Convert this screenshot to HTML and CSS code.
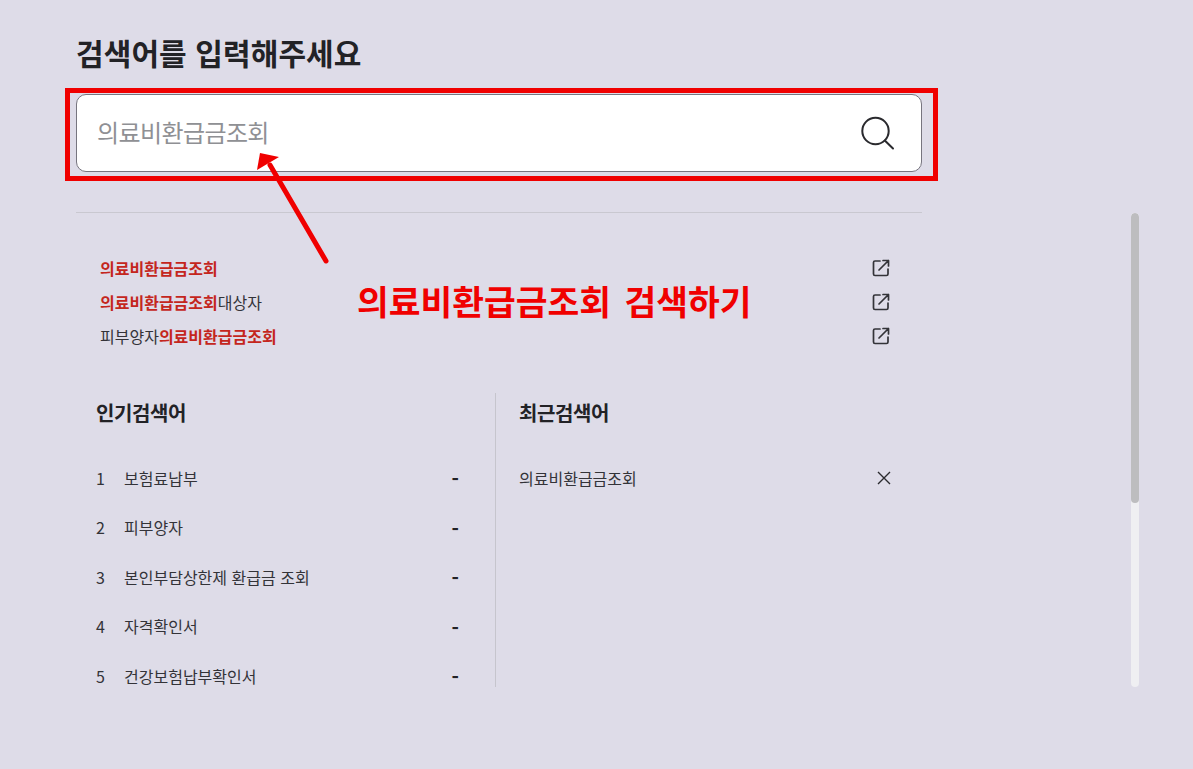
FILE: index.html
```html
<!DOCTYPE html>
<html lang="ko">
<head>
<meta charset="utf-8">
<title>검색</title>
<link rel="stylesheet" href="styles.css">
</head>
<body>
<main class="panel">
  <h1 class="title">검색어를 입력해주세요</h1>
  <div class="search">
    <span class="placeholder">의료비환급금조회</span>
    <svg class="search-icon" width="36" height="36" viewBox="0 0 36 36" fill="none" stroke="#2a2a2e" stroke-width="2"><circle cx="16.5" cy="16" r="13.2"/><path d="M25.8 25.5 L34 33.5" stroke-linecap="round"/></svg>
  </div>
  <hr class="rule">
  <ul class="suggest">
    <li class="suggest-row"><span><b>의료비환급금조회</b></span><svg class="ext" width="18" height="18" viewBox="0 0 18 18" fill="none" stroke="#333338" stroke-width="1.700" stroke-linecap="round" stroke-linejoin="round"><path d="M8 2H3a1.500 1.500 0 0 0-1.500 1.500v11.500a1.500 1.500 0 0 0 1.500 1.500h11.500a1.500 1.500 0 0 0 1.500-1.500V10"/><path d="M7 11 L16.500 1.500M11 1.500h5.500V7"/></svg></li>
    <li class="suggest-row"><span><b>의료비환급금조회</b>대상자</span><svg class="ext" width="18" height="18" viewBox="0 0 18 18" fill="none" stroke="#333338" stroke-width="1.700" stroke-linecap="round" stroke-linejoin="round"><path d="M8 2H3a1.500 1.500 0 0 0-1.500 1.500v11.500a1.500 1.500 0 0 0 1.500 1.500h11.500a1.500 1.500 0 0 0 1.500-1.500V10"/><path d="M7 11 L16.500 1.500M11 1.500h5.500V7"/></svg></li>
    <li class="suggest-row"><span>피부양자<b>의료비환급금조회</b></span><svg class="ext" width="18" height="18" viewBox="0 0 18 18" fill="none" stroke="#333338" stroke-width="1.700" stroke-linecap="round" stroke-linejoin="round"><path d="M8 2H3a1.500 1.500 0 0 0-1.500 1.500v11.500a1.500 1.500 0 0 0 1.500 1.500h11.500a1.500 1.500 0 0 0 1.500-1.500V10"/><path d="M7 11 L16.500 1.500M11 1.500h5.500V7"/></svg></li>
  </ul>
  <div class="columns">
    <section class="col col-left">
      <h2 class="col-title">인기검색어</h2>
      <ol class="rank">
        <li class="rank-row"><span class="num">1</span><span class="term">보험료납부</span><span class="dash">-</span></li>
        <li class="rank-row"><span class="num">2</span><span class="term">피부양자</span><span class="dash">-</span></li>
        <li class="rank-row"><span class="num">3</span><span class="term">본인부담상한제 환급금 조회</span><span class="dash">-</span></li>
        <li class="rank-row"><span class="num">4</span><span class="term">자격확인서</span><span class="dash">-</span></li>
        <li class="rank-row"><span class="num">5</span><span class="term">건강보험납부확인서</span><span class="dash">-</span></li>
      </ol>
    </section>
    <section class="col col-right">
      <h2 class="col-title">최근검색어</h2>
      <div class="recent-row"><span>의료비환급금조회</span><svg width="16" height="16" viewBox="0 0 16 16" fill="none" stroke="#2a2a2e" stroke-width="1.400"><path d="M2 2 L14 14 M14 2 L2 14"/></svg></div>
    </section>
  </div>
</main>
<div class="scrollbar"><div class="thumb"></div></div>

<div class="frame"></div>
<svg class="arrow" width="90" height="130" viewBox="0 0 90 130" fill="none"><path d="M76 116 L20 20" stroke="#f00000" stroke-width="5" stroke-linecap="round"/><path d="M10 8 L29 12 L7 25 Z" fill="#f00000"/></svg>
<div class="note">의료비환급금조회 검색하기</div>
</body>
</html>
```
FILE: styles.css
```css
* { box-sizing: border-box; }
html, body { margin: 0; padding: 0; }
body {
  width: 1193px;
  height: 769px;
  overflow: hidden;
  background: #dedce8;
  font-family: "Noto Sans CJK KR", "Noto Sans", sans-serif;
  color: #222226;
  position: relative;
}
.panel { width: 846px; margin-left: 76px; padding-top: 31px; }
.title {
  margin: 0;
  font-size: 30px;
  line-height: 42px;
  font-weight: 700;
  letter-spacing: 0.1px;
  color: #222226;
}
.search {
  margin-top: 21px;
  height: 78px;
  background: #fff;
  border: 1px solid #77757f;
  border-radius: 10px;
  display: flex;
  align-items: center;
  justify-content: space-between;
  padding: 0 26px 0 20px;
}
.placeholder { font-size: 24px; line-height: 34px; letter-spacing: -0.6px; color: #8f9094; margin-bottom: 2px; }
.rule { margin: 40px 0 0; border: 0; border-top: 1px solid #c9c8d0; }
.suggest { list-style: none; margin: 38px 0 0; padding: 0 32px 0 24px; }
.suggest-row {
  height: 34px;
  display: flex;
  align-items: center;
  justify-content: space-between;
  font-size: 16px;
  line-height: 22px;
  color: #333338;
}
.suggest-row b { color: #c4261d; font-weight: 700; }
.columns { display: flex; margin-top: 40px; height: 294px; }
.col-left { width: 420px; border-right: 1px solid #c6c5cd; padding: 0 36px 0 20px; }
.col-right { flex: 1; padding: 0 30px 0 23px; }
.col-title { margin: 0; font-size: 20px; line-height: 40px; font-weight: 700; letter-spacing: -0.4px; color: #222226; }
.rank { list-style: none; margin: 20px 0 0; padding: 0; }
.rank-row { height: 49.500px; display: flex; align-items: center; font-size: 16px; line-height: 20px; color: #333338; }
.num { width: 28px; }
.term { flex: 1; }
.dash { font-weight: 700; font-size: 20px; line-height: 20px; color: #222226; margin-top: 3px; }
.recent-row { margin-top: 20px; height: 49.500px; display: flex; align-items: center; justify-content: space-between; font-size: 16px; color: #333338; }
.scrollbar { position: absolute; left: 1131px; top: 213px; width: 8px; height: 474px; background: #efeff2; border-radius: 4px; overflow: hidden; }
.thumb { height: 290px; background: #bdbdbf; border-radius: 4px; }
.frame { position: absolute; left: 65px; top: 88px; width: 873px; height: 93px; border: 5px solid #f00000; }
.arrow { position: absolute; left: 250px; top: 145px; }
.note { position: absolute; left: 357px; top: 275px; font-size: 34.500px; line-height: 50px; font-weight: 700; color: #f00000; word-spacing: 4px; white-space: nowrap; }
```
